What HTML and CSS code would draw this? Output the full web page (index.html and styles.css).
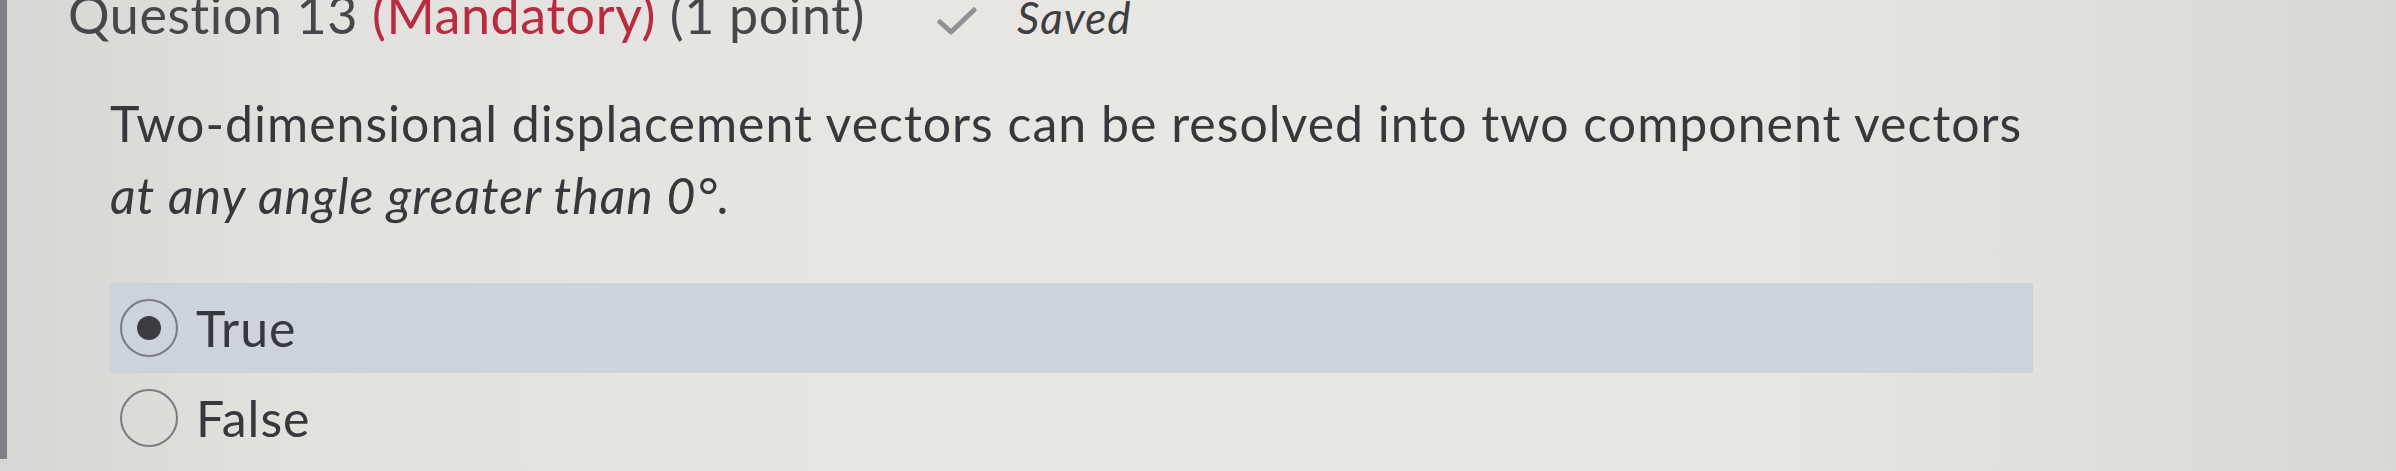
FILE: index.html
```html
<!DOCTYPE html>
<html lang="en">
<head>
    <meta charset="UTF-8">
    <title>Quiz - Question 13</title>
    <link rel="stylesheet" href="styles.css">
</head>
<body>

<div class="frame">
    <div class="question-head">
        <h2 class="question-title">Question 13 <span class="mandatory">(Mandatory)</span> (1 point)</h2>
        <span class="save-state">
            <svg class="check" viewBox="0 0 40 28" width="40" height="28">
                <path d="M3 15 L14 25 L37 3" fill="none" stroke="#8f9295" stroke-width="5" stroke-linecap="round" stroke-linejoin="round"/>
            </svg>
            <em>Saved</em>
        </span>
    </div>

    <p class="question-text">
        Two-dimensional displacement vectors can be resolved into two component vectors<br>
        <em>at any angle greater than 0°.</em>
    </p>

    <div class="choices">
        <label class="choice selected">
            <span class="radio"><span class="dot"></span></span>
            <span class="choice-text">True</span>
        </label>
        <label class="choice">
            <span class="radio"></span>
            <span class="choice-text">False</span>
        </label>
    </div>
</div>

</body>
</html>
```

FILE: styles.css
```css
html, body {
    height: 100%;
}
body {
    margin: 0;
    font-family: Lato, 'Open Sans', sans-serif;
    color: #3a3c3f;
    background: linear-gradient(90deg, #d6d6d4 0%, #e2e1de 12%, #e8e7e3 45%, #e6e5e1 75%, #d9d8d4 100%);
    overflow: hidden;
}
.frame {
    height: 100%;
    box-sizing: border-box;
    border-left: 7px solid #7e8084;
    padding-left: 61px;
}
.question-head {
    display: flex;
    align-items: baseline;
    margin-top: -12px;
}
.question-title {
    margin: 0;
    font-size: 52px;
    font-weight: 400;
    line-height: 1;
    color: #45474a;
    letter-spacing: 0.6px;
}
.mandatory {
    color: #b92b3f;
}
.save-state {
    display: flex;
    align-items: baseline;
    margin-left: 72px;
    font-size: 44px;
    letter-spacing: 1px;
    color: #3d3f42;
}
.save-state .check {
    margin-right: 40px;
    align-self: center;
    position: relative;
    top: 4px;
}
.save-state em {
    font-style: italic;
}
.question-text {
    margin: 44px 0 0 42px;
    font-size: 50px;
    line-height: 72px;
    letter-spacing: 1px;
    color: #36383b;
}
.choices {
    margin: 52px 0 0 42px;
    width: 1923px;
}
.choice {
    display: flex;
    align-items: center;
    height: 90px;
    padding-left: 10px;
    font-size: 50px;
    letter-spacing: 1px;
    color: #36383b;
}
.choice.selected {
    background-color: #ccd3db;
}
.radio {
    width: 58px;
    height: 58px;
    box-sizing: border-box;
    border: 2px solid #7a7c7f;
    border-radius: 50%;
    display: flex;
    align-items: center;
    justify-content: center;
    margin-right: 18px;
}
.radio .dot {
    width: 24px;
    height: 24px;
    border-radius: 50%;
    background-color: #3b3d40;
}
```
